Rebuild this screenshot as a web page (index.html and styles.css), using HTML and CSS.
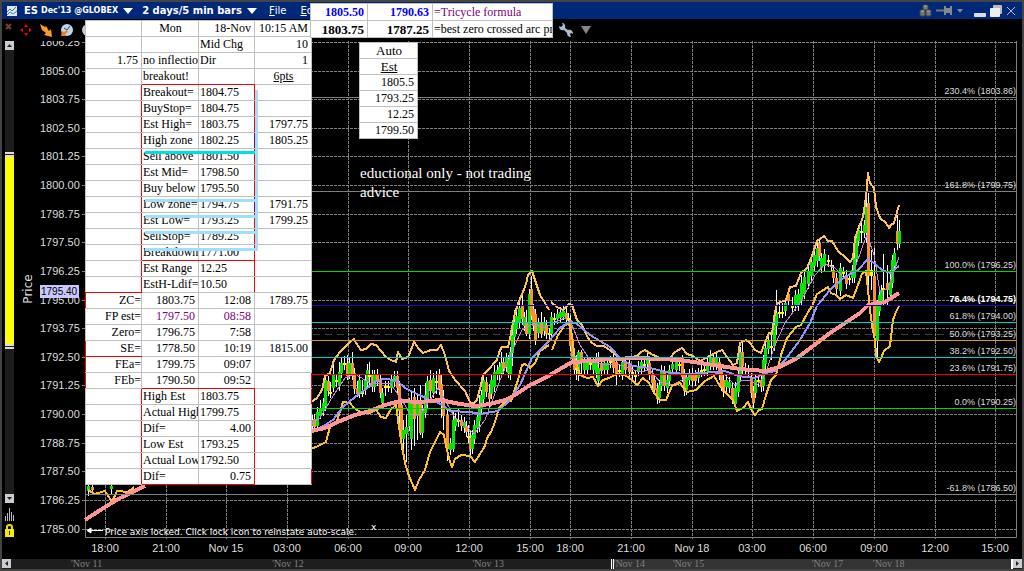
FILE: index.html
```html
<!DOCTYPE html>
<html lang="en">
<head>
  <meta charset="UTF-8">
  <title>ES Dec'13 @GLOBEX</title>
  <link rel="stylesheet" href="styles.css">
</head>
<body>

  <header class="titlebar">
    <svg class="app-icon" viewBox="0 0 10 10"><rect width="10" height="10" fill="#dde8ee"/><path d="M0 6L3 3L5 5L9 1" stroke="#3a8a4a" fill="none"/><path d="M0 9L3 6L6 8L10 5" stroke="#4a78b8" fill="none"/></svg>
    <button class="symbol">ES <small>Dec'13 @GLOBEX</small></button>
    <svg class="caret" viewBox="0 0 10 6"><path d="M0 0H10L5 6Z"/></svg>
    <button class="period">2 days/5 min bars</button>
    <svg class="caret" viewBox="0 0 10 6"><path d="M0 0H10L5 6Z"/></svg>
    <nav class="menu">
      <button><u>F</u>ile</button>
      <button><u>E</u>dit</button>
    </nav>
    <div class="window-buttons">
      <button aria-label="Group"><svg width="13" height="13" viewBox="0 0 13 13"><g fill="#777" stroke="#444"><rect x="4" y="1" width="5" height="5" rx="1"/><rect x="1" y="6" width="5" height="6" rx="1"/><rect x="7" y="6" width="5" height="6" rx="1"/></g><path d="M5 2H8M2 7H5M8 7H11" stroke="#aaa"/></svg></button>
      <button aria-label="Pin"><svg width="17" height="9" viewBox="0 0 17 9"><path d="M0 4.500H8" stroke="#777" stroke-width="2"/><path d="M8 0H10V2H14V0H16V9H14V7H10V9H8Z" fill="#888"/></svg></button>
      <button aria-label="Pin options"><svg width="6" height="4" viewBox="0 0 6 4"><path d="M0 0H6L3 4Z" fill="#888"/></svg></button>
      <button class="minimize" aria-label="Minimize"><svg width="12" height="12" viewBox="0 0 12 12"><rect y="8" width="12" height="4" rx="1" fill="#ddd"/></svg></button>
      <button aria-label="Restore"><svg width="12" height="12" viewBox="0 0 12 12"><rect x="3" y="0" width="9" height="9" rx="1" fill="#bbb"/><rect x="0" y="3" width="10" height="9" rx="1" fill="#eee"/></svg></button>
      <button aria-label="Close"><svg width="10" height="10" viewBox="0 0 10 10"><path d="M1 1L9 9M9 1L1 9" stroke="#bbb"/></svg></button>
    </div>
  </header>

  <div class="toolbar">
    <button class="close" aria-label="Close chart"><svg width="7" height="7" viewBox="0 0 7 7"><path d="M1 1L6 6M6 1L1 6" stroke="#803838" stroke-width="2"/></svg></button>
    <button aria-label="Move"><svg width="12" height="12" viewBox="0 0 12 12"><path d="M6 0L8 3H4ZM6 12L8 9H4ZM0 6L3 4V8ZM12 6L9 4V8Z" fill="#f00"/></svg></button>
    <button aria-label="Trade"><svg width="12" height="13" viewBox="0 0 12 13"><path d="M0 0L5 3L6 2L9 7L11 5L12 13L4 11L6 9L2 6Z" fill="#ff9a20"/></svg></button>
    <button aria-label="Alert"><svg width="14" height="14" viewBox="0 0 14 14"><circle cx="7" cy="7" r="6" fill="#bcd8ea"/><path d="M7 7L10 3M7 7L4 5" stroke="#345"/><path d="M1 13L2 8L4 9L7 7L8 9L5 11L6 13Z" fill="#f07820"/></svg></button>
    <button aria-label="Info"><svg width="12" height="12" viewBox="0 0 12 12"><circle cx="6" cy="6" r="6" fill="#ccc"/></svg></button>
    <button class="settings" aria-label="Settings"><svg width="14" height="14" viewBox="0 0 14 14"><path d="M3 0L4 2L2 4L0 3C0 6 2 8 5 7L8 10C8 13 10 14 12 14L11 11L12 10L14 11C14 8 12 6 9 7L6 5C7 2 5 0 3 0Z" fill="#a8bcd8"/></svg></button>
    <button aria-label="More"><svg width="10" height="8" viewBox="0 0 10 8"><path d="M0 0H10L5 8Z" fill="#888"/></svg></button>
  </div>

  <main class="workspace">
    <aside class="price-scroll">
      <button class="arrow" aria-label="Scroll up"><svg viewBox="0 0 9 9"><path d="M2 6H7L4.500 3Z"/></svg></button>
      <div class="track">
        <div class="thumb"></div>
      </div>
      <button class="arrow" aria-label="Scroll down"><svg viewBox="0 0 9 9"><path d="M2 3H7L4.500 6Z"/></svg></button>
      <svg class="bars-icon" viewBox="0 0 9 13"><path d="M.5 8V13M2.500 5V13M4.500 0V13M6.500 4V13M8.500 7V13" stroke="#bbb"/></svg>
      <svg class="lock-icon" viewBox="0 0 9 13"><path d="M2 6V3Q2 1 4.500 1T7 3V6" fill="none" stroke="#f0e000" stroke-width="2"/><rect y="5" width="9" height="8" fill="#f8e800"/><path d="M4.500 7V11" stroke="#222"/></svg>
    </aside>
    <svg class="chart" id="chart" viewBox="16 41 1006 518"></svg>
  </main>

  <footer class="time-scroll">
    <button class="arrow" aria-label="Scroll left"><svg viewBox="0 0 9 9"><path d="M6 2V7L3 4.500Z"/></svg></button>
    <div class="dates">
      <span class="range"></span>
      <span class="d1">'Nov 11</span>
      <span class="d2">'Nov 12</span>
      <span class="d3">'Nov 13</span>
      <span class="d4">'Nov 14</span>
      <span class="d5">'Nov 15</span>
      <span class="d6">'Nov 17</span>
      <span class="d7">'Nov 18</span>
    </div>
    <button class="arrow" aria-label="Scroll right"><svg viewBox="0 0 9 9"><path d="M3 2V7L6 4.500Z"/></svg></button>
  </footer>

  <div class="panel levels">
    <table>
      <colgroup><col class="c1"><col class="c2"><col class="c3"><col class="c4"></colgroup>
      <tr class="head"><td></td><td class="mid">Mon</td><td class="num">18-Nov</td><td class="num">10:15 AM</td></tr>
      <tr><td></td><td></td><td>Mid Chg</td><td class="num">10</td></tr>
      <tr><td class="num">1.75</td><td>no inflection</td><td>Dir</td><td class="num">1</td></tr>
      <tr><td></td><td class="bb">breakout!</td><td class="bb"></td><td class="mid"><u>6pts</u></td></tr>
      <tr><td class="br"></td><td>Breakout=</td><td class="br">1804.75</td><td></td></tr>
      <tr><td class="br"></td><td>BuyStop=</td><td class="br">1804.75</td><td></td></tr>
      <tr><td class="br"></td><td>Est High=</td><td class="br">1803.75</td><td class="num">1797.75</td></tr>
      <tr><td class="br"></td><td>High zone</td><td class="brp">1802.25</td><td class="num">1805.25</td></tr>
      <tr><td class="br"></td><td>Sell above</td><td class="br">1801.50</td><td></td></tr>
      <tr><td class="br"></td><td>Est Mid=</td><td class="br">1798.50</td><td></td></tr>
      <tr><td class="br"></td><td>Buy below</td><td class="br">1795.50</td><td></td></tr>
      <tr><td class="br"></td><td>Low zone=</td><td class="brp">1794.75</td><td class="num">1791.75</td></tr>
      <tr><td class="br"></td><td>Est Low=</td><td class="br">1793.25</td><td class="num">1799.25</td></tr>
      <tr><td class="br"></td><td>SellStop=</td><td class="br">1789.25</td><td></td></tr>
      <tr><td class="br"></td><td class="bb">Breakdown</td><td class="br bb">1771.00</td><td></td></tr>
      <tr><td class="br"></td><td>Est Range</td><td class="br">12.25</td><td></td></tr>
      <tr><td class="br bb"></td><td>EstH-Ldif=</td><td class="br">10.50</td><td></td></tr>
      <tr><td class="est bl">ZC=</td><td class="num">1803.75</td><td class="num">12:08</td><td class="num">1789.75</td></tr>
      <tr class="fp"><td class="est">FP est=</td><td class="num">1797.50</td><td class="num">08:58</td><td></td></tr>
      <tr><td class="est">Zero=</td><td class="num">1796.75</td><td class="num">7:58</td><td></td></tr>
      <tr><td class="est bl bb">SE=</td><td class="num">1778.50</td><td class="num">10:19</td><td class="num">1815.00</td></tr>
      <tr><td class="est bl">FEa=</td><td class="num">1799.75</td><td class="num">09:07</td><td></td></tr>
      <tr><td class="est bl">FEb=</td><td class="num bb">1790.50</td><td class="num bb">09:52</td><td class="br"></td></tr>
      <tr><td class="br"></td><td>High Est</td><td class="br">1803.75</td><td class="br"></td></tr>
      <tr><td class="br"></td><td>Actual High</td><td class="br">1799.75</td><td></td></tr>
      <tr><td class="br"></td><td>Dif=</td><td class="num br">4.00</td><td></td></tr>
      <tr><td class="br"></td><td>Low Est</td><td class="br">1793.25</td><td></td></tr>
      <tr><td class="br"></td><td>Actual Low</td><td class="br">1792.50</td><td></td></tr>
      <tr><td class="br"></td><td class="bb">Dif=</td><td class="num br bb">0.75</td><td class="br"></td></tr>
    </table>
    <svg class="marks" width="115" height="162" viewBox="0 0 115 162">
      <path d="M0 63.500H110" stroke="#00e0e0"/>
      <path d="M0 111.500H111M0 127.500H111M0 143.500H111M0 160.500H113M111.500 1V162" stroke="#a0e0ff"/>
    </svg>
  </div>

  <div class="panel formulas">
    <table>
      <colgroup><col class="f1"><col class="f2"><col class="f3"></colgroup>
      <tr class="tri"><th>1805.50</th><th>1790.63</th><td>=Tricycle formula</td></tr>
      <tr class="arc"><th>1803.75</th><th>1787.25</th><td>=best zero crossed arc price</td></tr>
    </table>
  </div>

  <div class="panel auto">
    <table>
      <tr><td class="mid">Auto</td></tr>
      <tr><td class="mid"><u>Est</u></td></tr>
      <tr><td class="num">1805.5</td></tr>
      <tr><td class="num">1793.25</td></tr>
      <tr><td class="num">12.25</td></tr>
      <tr><td class="num">1799.50</td></tr>
    </table>
  </div>

  <p class="note">eductional only - not trading advice</p>

  <script src="chart.js"></script>
</body>
</html>
```
FILE: styles.css
```css
* {
  margin: 0;
  padding: 0;
  box-sizing: border-box;
}

body {
  background: #000;
  color: #fff;
  min-height: 100vh;
  display: flex;
  flex-direction: column;
  position: relative;
  border: 2px solid #444;
  font-family: 'Liberation Sans', sans-serif;
  overflow: hidden;
}

button {
  background: none;
  border: none;
  color: inherit;
  font: inherit;
  display: flex;
  align-items: center;
}

/* title bar */
.titlebar {
  height: 17px;
  background: #002878;
  display: flex;
  align-items: center;
  font: bold 10px 'DejaVu Sans', sans-serif;
  padding: 0 6px 0 5px;
}

.app-icon {
  width: 10px;
  height: 10px;
  margin-right: 7px;
}

.symbol {
  gap: 3px;
  white-space: nowrap;
}

.symbol small {
  font-size: 8px;
}

.caret {
  width: 10px;
  height: 6px;
  fill: #fff;
  margin: 0 9px 0 5px;
}

.menu {
  display: flex;
  gap: 14px;
  font-weight: normal;
  margin-left: 3px;
}

.window-buttons {
  display: flex;
  align-items: center;
  gap: 4px;
  margin-left: auto;
}

.window-buttons .minimize {
  margin-left: 7px;
}

/* toolbar */
.toolbar {
  height: 22px;
  display: flex;
  align-items: center;
  gap: 8px;
  padding-left: 3px;
}

.toolbar .close {
  align-self: flex-start;
  margin-top: 4px;
}

.toolbar .settings {
  margin-left: 457px;
}

/* chart area */
.workspace {
  flex: 1;
  display: flex;
}

.price-scroll {
  width: 14px;
  padding: 0 2px 22px 3px;
  display: flex;
  flex-direction: column;
}

.arrow {
  width: 9px;
  height: 9px;
  background: #ccc;
  flex: none;
}

.arrow svg {
  width: 9px;
  height: 9px;
  fill: #124;
}

.track {
  flex: 1;
  background: #1c1c1c;
  display: grid;
  grid-template-rows: 102fr 197fr 145fr;
}

.thumb {
  grid-row: 2;
  background: #ff0;
  border-top: 5px double #ddd;
  border-bottom: 5px double #ddd;
  background-clip: padding-box;
}

.bars-icon,
.lock-icon {
  width: 9px;
  height: 13px;
  margin-top: 5px;
}

.lock-icon {
  margin-top: 3px;
}

.chart {
  flex: 1;
  min-width: 0;
}

.grid {
  stroke: #808080;
  stroke-dasharray: 3 1;
}

.frame {
  fill: none;
  stroke: #808080;
}

.axis {
  font-size: 11px;
  fill: #ddd;
}

.fib {
  font-size: 9px;
  fill: #ddd;
  text-anchor: end;
}

.fib.strong {
  font-weight: bold;
  fill: #fff;
}

.mid-label {
  text-anchor: middle;
}

.price-title {
  font: 12px 'DejaVu Sans', sans-serif;
  fill: #ddd;
  text-anchor: middle;
}

.last-price {
  fill: #c8c8ff;
}

.last-price-text {
  font-size: 10px;
  fill: #000;
}

.message {
  font: 9px 'DejaVu Sans', sans-serif;
  fill: #fff;
}

.line {
  fill: none;
  stroke-linejoin: round;
  shape-rendering: crispEdges;
}

.upper { stroke: #ffc060; stroke-width: 2; }
.lower { stroke: #ffc028; stroke-width: 2; }
.slow { stroke: #ff9494; stroke-width: 4; }
.medium { stroke: #9494ff; stroke-width: 2; }
.fast { stroke: #d080e0; }

/* bottom scroll bar */
.time-scroll {
  height: 10px;
  display: flex;
  background: #1e1e1e;
}

.dates {
  flex: 1;
  display: grid;
  grid-template-columns: 60fr 201fr 200fr 141fr 59fr 139fr 61fr 140fr;
  grid-template-rows: 10px;
  color: #808080;
  font: 10px/10px 'Liberation Serif', serif;
}

.dates span {
  grid-row: 1;
  white-space: nowrap;
}

.dates .range {
  grid-column: 5 / 9;
  margin-left: -3px;
  background: #333;
  border-left: 3px double #fff;
  border-right: 2px solid #fff;
}

.d1 { grid-column: 2; }
.d2 { grid-column: 3; }
.d3 { grid-column: 4; }
.d4 { grid-column: 5; }
.d5 { grid-column: 6; }
.d6 { grid-column: 7; }
.d7 { grid-column: 8; }

/* spreadsheet cut-outs lying over the chart */
.panel {
  position: absolute;
  background: #fff;
  color: #000;
  font: 12px/15px 'Liberation Serif', serif;
}

.panel table {
  width: 100%;
  border-collapse: collapse;
  table-layout: fixed;
}

.panel td,
.panel th {
  height: 16px;
  border: 1px solid #c0c0c0;
  padding-left: 1px;
  overflow: hidden;
  white-space: nowrap;
}

.panel .num {
  text-align: right;
  padding-right: 3px;
}

.panel .est {
  text-align: right;
}

.panel .mid {
  text-align: center;
}

.panel .bl { border-left-color: #f00; }
.panel .br { border-right-color: #f00; }
.panel .bb { border-bottom-color: #f00; }
.panel .brp { border-right-color: #800080; }

.fp .num {
  color: #800080;
}

.levels {
  left: 83px;
  top: 18px;
  width: 226px;
}

.levels .head td {
  height: 16px;
}

.c1 { width: 56px; }
.c2 { width: 57px; }
.c3 { width: 56px; }
.c4 { width: 57px; }

.marks {
  position: absolute;
  left: 60px;
  top: 69px;
  fill: none;
  stroke-width: 3;
}

.formulas {
  left: 308px;
  top: 1px;
  width: 243px;
}

.formulas .f1 { width: 57px; }
.formulas .f2 { width: 65px; }

.formulas td,
.formulas th {
  height: 17px;
}

.formulas th {
  text-align: right;
  padding-right: 3px;
}

.tri th { color: #00f; }
.tri td { color: #800080; }
.arc th { font-size: 13px; }

.auto {
  left: 357px;
  top: 40px;
  width: 59px;
}

.auto .mid {
  font-size: 13px;
}

.note {
  position: absolute;
  left: 358px;
  top: 162px;
  width: 180px;
  font: 15px/19px 'Liberation Serif', serif;
}
```
FILE: chart.js
```js
const chart = document.getElementById('chart');
const LEFT = 85, RIGHT = 1016, TOP = 41, BOTTOM = 537;

function add(tag, attrs, text) {
  const el = document.createElementNS('http://www.w3.org/2000/svg', tag);
  for (const key in attrs) el.setAttribute(key, attrs[key]);
  if (text) el.textContent = text;
  chart.appendChild(el);
}

const priceY = p => Math.round(185 + (1800 - p) * 22.9);

// grid and axes
const times = [
  [105, '18:00'], [166, '21:00'], [226, 'Nov 15'], [287, '03:00'], [348, '06:00'],
  [408, '09:00'], [469, '12:00'], [530, '15:00'], [570, '18:00'], [631, '21:00'],
  [692, 'Nov 18'], [752, '03:00'], [813, '06:00'], [874, '09:00'], [935, '12:00'], [995, '15:00']
];

for (let p = 1785; p <= 1806.25; p += 1.25) {
  const y = priceY(p);
  add('path', { class: 'grid', d: `M${LEFT - 3} ${y + 0.5}H${RIGHT}` });
  add('text', { class: 'axis', x: 40, y: y + 4 }, p.toFixed(2));
}
times.forEach(([x, label]) => {
  add('path', { class: 'grid', d: `M${x + 0.5} ${TOP}V${BOTTOM + 2}` });
  add('text', { class: 'axis mid-label', x: x, y: 552 }, label);
});
add('path', { class: 'frame', d: `M${LEFT + 0.5} ${TOP}V${BOTTOM + 0.5}H${RIGHT + 0.5}V${TOP}` });
add('path', { d: `M${LEFT} 334.5H${RIGHT}`, stroke: '#404040', 'stroke-dasharray': '7 5' });

// x, body top, body bottom, colour, high, low
const bars = [
  [88,486,490,'g'],[92,487,489,'o'],[111,486,488,'g'],
  [312,420,425,'g'],[314,419,426,'o'],[317,412,425,'g'],[320,409,415,'g',400,419],[323,403,410,'g'],[325,380,405,'g'],
  [328,381,390,'o'],[330,392,393,'y',382,398],[333,375,387,'g',364,392],[336,380,381,'y'],[339,372,385,'g',362,391],
  [341,363,372,'g'],[344,363,364,'y',356,370],[347,363,375,'o',355,380],[349,363,373,'g'],[352,363,373,'o',352,380],
  [354,373,388,'o'],[357,388,393,'o',381,397],[359,380,392,'g'],[362,392,393,'y',380,397],[365,380,389,'g'],
  [367,370,381,'g',364,389],[369,375,376,'y',362,385],[372,375,386,'o'],[374,375,386,'g'],[377,374,380,'o'],[380,380,392,'o'],
  [382,393,402,'g'],[385,386,387,'y',381,396],[388,386,387,'y',381,392],[391,380,387,'g'],[394,376,381,'g'],
  [397,376,387,'o'],[399,386,410,'o',381,430],[401,405,438,'o',400,450],[403,430,438,'g',420,460],[406,427,433,'g',415,462],
  [409,403,425,'g'],[411,403,438,'g',390,450],[414,397,418,'o',388,446],[417,403,415,'g',395,440],[420,403,432,'o',385,435],
  [422,410,432,'g'],[425,395,412,'g',383,418],[427,381,402,'g'],[430,380,390,'o',370,402],[433,378,392,'g'],[436,381,382,'y',371,394],
  [439,375,388,'o',369,395],[441,384,400,'o',375,418],[443,400,415,'o',390,430],[447,415,448,'o',410,461],[450,443,449,'g'],
  [453,420,448,'g',412,452],[455,418,425,'g'],[458,420,421,'y',408,427],[461,420,425,'o'],[464,422,427,'g'],[466,426,431,'o'],
  [468,436,437,'y',425,443],[470,438,448,'o',430,456],[472,435,448,'g'],[474,425,438,'g'],[477,417,427,'g'],
  [479,408,420,'g',395,432],[481,395,408,'g'],[483,380,398,'g'],[486,382,391,'o'],[489,393,398,'o',384,409],[491,380,393,'g'],
  [494,372,386,'g',365,392],[497,370,374,'g'],[499,367,374,'g'],[501,363,372,'g',352,378],[503,362,368,'o',357,375],[506,358,366,'g'],
  [508,360,372,'g'],[510,352,374,'g'],[512,335,352,'g',322,366],[514,323,336,'g',310,345],[516,316,328,'g'],[519,308,322,'g'],
  [522,305,318,'o',293,325],[524,317,325,'g'],[526,322,333,'o',310,336],[529,294,333,'g'],[531,289,315,'o',276,320],
  [533,309,325,'o'],[535,314,339,'o'],[538,323,332,'g'],[541,322,333,'o',312,338],[544,322,330,'g'],[546,325,333,'o'],
  [549,333,334,'y'],[551,317,333,'g'],[554,318,319,'y'],[557,314,318,'g'],[560,312,317,'g'],[563,311,316,'g',306,320],
  [566,313,318,'o'],[568,318,319,'y'],[570,320,345,'o'],[572,340,358,'o'],[574,357,369,'o'],[576,368,369,'y',355,380],
  [578,352,373,'g',350,381],[581,352,362,'o',350,375],[584,363,369,'g'],[587,361,369,'g'],[590,363,364,'y'],[593,363,369,'g'],
  [596,358,372,'g'],[598,368,380,'g',352,384],[601,363,370,'o'],[604,363,369,'g'],[607,363,369,'g'],[610,361,362,'y'],
  [613,359,367,'o'],[616,362,374,'o',358,385],[619,370,371,'y'],[622,362,374,'g'],[625,363,369,'o'],[629,364,371,'o'],
  [632,372,373,'y'],[635,375,376,'y'],[638,366,370,'g'],[641,362,368,'g'],[644,364,365,'y'],[647,358,363,'g',350,370],
  [649,363,374,'o'],[652,374,382,'o'],[654,380,389,'o'],[657,388,398,'o'],[659,385,397,'g'],[661,370,385,'g'],[664,371,385,'o'],
  [667,380,387,'g'],[669,370,380,'g'],[672,364,368,'g'],[676,362,369,'g'],[679,364,365,'y'],[682,360,376,'o'],[684,374,390,'o'],
  [686,378,389,'g'],[689,374,379,'g'],[692,373,380,'o'],[695,375,380,'o'],[698,373,377,'g'],[701,370,371,'y'],[704,369,370,'y'],
  [707,362,370,'g'],[710,357,363,'g',350,370],[713,358,364,'o'],[716,358,364,'g'],[719,362,374,'o'],[721,372,385,'o'],
  [723,380,391,'o'],[726,380,386,'g'],[729,382,387,'g'],[732,388,398,'o'],[735,388,403,'g',382,409],[738,375,391,'g'],
  [740,352,375,'g'],[742,352,365,'o',342,375],[745,368,369,'y'],[748,370,371,'y'],[751,378,392,'o'],[753,391,402,'o'],
  [755,380,392,'g'],[758,380,381,'y'],[761,380,386,'o'],[763,360,385,'g'],[765,348,363,'g'],[768,341,348,'g'],
  [771,346,347,'y',333,360],[774,325,345,'g'],[776,313,325,'g',290,335],[779,312,313,'y',302,318],[782,312,313,'y',303,318],
  [785,303,310,'g'],[788,294,300,'o'],[792,306,307,'y',297,312],[795,295,305,'g'],[798,294,305,'g'],[801,283,300,'g',275,305],
  [804,277,293,'g'],[808,272,283,'g'],[811,262,275,'g'],[814,255,265,'g'],[817,248,260,'g',240,267],[819,243,255,'o'],
  [821,258,267,'g'],[824,254,265,'g'],[828,260,261,'y'],[831,265,266,'y'],[833,270,277,'o'],[836,278,288,'o'],[840,268,290,'g'],
  [843,272,273,'y'],[846,275,283,'o'],[849,278,279,'y'],[852,270,277,'g'],[854,258,277,'g'],[856,238,258,'g'],[858,230,240,'g'],
  [861,231,232,'y',222,243],[864,225,232,'g'],[866,207,232,'g',190,243],[868,203,275,'o',193,285],[871,270,275,'y',250,290],
  [874,276,335,'o',248,345],[877,305,340,'g',300,357],[879,295,310,'g'],[881,290,300,'g'],[883,288,289,'y',254,305],
  [887,283,289,'o',265,305],[890,282,294,'g',270,300],[892,260,282,'g'],[894,253,265,'g'],[897,231,243,'o',215,250],[899,231,243,'g',220,248]
];
const colours = { g: '#00e800', o: '#ff9030', y: '#ffff00' };

bars.forEach(([x, top, bottom, c, high = top - 5, low = bottom + 6]) => {
  add('path', { d: `M${x + 0.5} ${high}V${low}`, stroke: '#fff' });
});
bars.forEach(([x, top, bottom, c]) => {
  add('rect', { x: x - 1, y: top, width: 3, height: bottom - top + 1, fill: colours[c] });
});

// indicators
const lines = {
  fast: ['311,424 320,418 333,396 345,378 355,374 370,383 390,383 402,400 410,414 420,415 430,400 438,388 445,400 455,418 465,425 474,434 485,420 500,380 515,345 522,330 532,324 545,328 555,322 565,318 572,325 580,345 590,360 600,364 620,365 640,372 650,370 660,382 672,385 690,376 700,372 715,373 725,375 735,385 742,380 750,380 757,385 765,375 775,345 785,323 800,303 815,275 825,264 835,268 845,279 855,268 862,248 867,235 874,255 880,292 888,288 899,257'],
  upper: ['311,402 317,398 322,390 325,376 330,373 334,360 340,352 346,346 350,342 354,339 356,343 361,350 366,349 371,344 376,345 381,351 386,357 391,360 396,362 398,352 402,359 408,357 411,350 414,342 419,349 423,353 431,350 437,350 441,345 445,355 449,371 456,381 465,391 470,402 473,404 477,400 481,385 483,375 487,371 497,360 500,350 502,347 508,347 510,339 512,327 515,313 519,301 523,292 526,284 528,275 532,271 536,283 540,295 545,303 549,310',
    '551,302 557,307 563,310 569,304 572,305 577,320 582,325 588,338 592,343 597,346 604,346 611,351 621,359 631,357 637,356 641,352 645,350 651,354 660,358 670,358 675,352 682,348 687,354 693,356 700,361 706,358 717,352 722,350 727,357 733,365 737,363 740,343 746,340 750,343 755,350 761,353 764,345 769,333 772,334 774,318 777,303 781,302 786,300 790,287 796,286 801,273 807,268 812,256 817,241 824,236 828,241 832,241 838,251 846,258 850,262 853,258 855,238 859,227 863,217 866,197 868,173 870,183 874,188 876,207 880,218 886,223 889,228 891,225 894,223 899,205'],
  lower: ['88,490 95,494 105,491 112,502 117,491 128,492 134,487',
    '311,449 318,446 326,442 330,427 337,421 343,402 350,403 354,408 362,413 370,413 376,410 381,417 386,418 391,409 396,405 398,420 401,440 405,463 409,476 412,483 415,490 419,480 425,470 430,452 437,438 440,432 444,435 447,450 450,462 452,467 455,459 461,455 470,456 475,462 480,454 485,446 487,438 491,432 495,422 499,408 507,400 511,401 514,392 518,380 522,365 525,364 530,368 535,363 540,351 549,345',
    '552,350 558,335 565,325 569,324 572,335 575,360 580,375 587,378 593,377 598,386 603,380 609,378 617,374 625,375 633,381 637,385 643,378 649,383 654,393 660,400 666,400 672,386 680,383 687,392 696,390 705,381 714,376 720,386 727,394 733,400 737,411 743,408 748,402 752,411 755,415 759,410 762,409 766,395 771,380 776,375 781,355 787,338 796,327 801,325 808,312 812,306 817,294 822,291 828,287 831,293 836,295 840,299 846,295 853,298 858,285 862,274 866,271 868,290 870,310 872,325 875,340 876,356 879,362 881,358 884,351 890,346 893,320 896,312 899,306'],
  medium: ['311,431 322,427 333,420 343,407 355,397 366,389 375,382 383,379 396,380 405,388 415,393 430,400 441,404 450,411 470,412 480,414 498,411 508,402 520,385 532,358 549,341 560,328 569,322 576,323 590,335 610,347 622,360 633,366 650,368 670,373 690,374 700,373 715,372 725,371 738,376 755,378 765,373 775,371 785,360 800,340 810,323 817,306 830,290 842,279 858,270 868,259 875,264 882,270 890,273 899,266'],
  slow: ['85,520 105,507 120,498 145,486', '311,431 325,428 340,421 355,415 370,411 385,405 400,401 420,402 440,400 460,404 475,406 490,404 505,400 515,395 530,385 545,378 560,369 572,362 590,361 610,359 640,358 680,360 700,363 720,366 740,369 765,371 780,367 797,358 813,346 830,333 845,323 860,313 868,305 885,302 899,293']
};
for (const name in lines) {
  lines[name].forEach(points => add('polyline', { class: 'line ' + name, points }));
}

// fibonacci levels
const levels = [
  [97, '#808080', '230.4% (1803.86)'],
  [191, '#808080', '161.8% (1799.75)'],
  [271, '#00d800', '100.0% (1796.25)'],
  [305, '#2000c0', '76.4% (1794.75)', 'strong'],
  [322, '#00d0d0', '61.8% (1794.00)'],
  [340, '#d8a000', '50.0% (1793.25)'],
  [357, '#00d0d0', '38.2% (1792.50)'],
  [374, '#f00000', '23.6% (1791.75)'],
  [408, '#00d800', '0.0% (1790.25)'],
  [494, '#808080', '-61.8% (1786.50)']
];
levels.forEach(([y, stroke, label, extra = '']) => {
  add('path', { d: `M${LEFT} ${y + 0.5}H${RIGHT}`, stroke });
  add('text', { class: 'fib ' + extra, x: RIGHT, y: y - 3 }, label);
});

// price axis extras
add('text', { class: 'price-title', transform: 'translate(32 289) rotate(-90)' }, 'Price');
add('rect', { class: 'last-price', x: 40, y: 285, width: 39, height: 13 });
add('text', { class: 'last-price-text', x: 41, y: 295 }, '1795.40');
add('path', { d: 'M88 530.5H103M87 530.5L91 528V533Z', stroke: '#fff', fill: '#fff' });
add('text', { class: 'message', x: 105, y: 535 }, 'Price axis locked. Click lock icon to reinstate auto-scale.');
add('text', { class: 'message', x: 371, y: 530 }, 'x');
```
